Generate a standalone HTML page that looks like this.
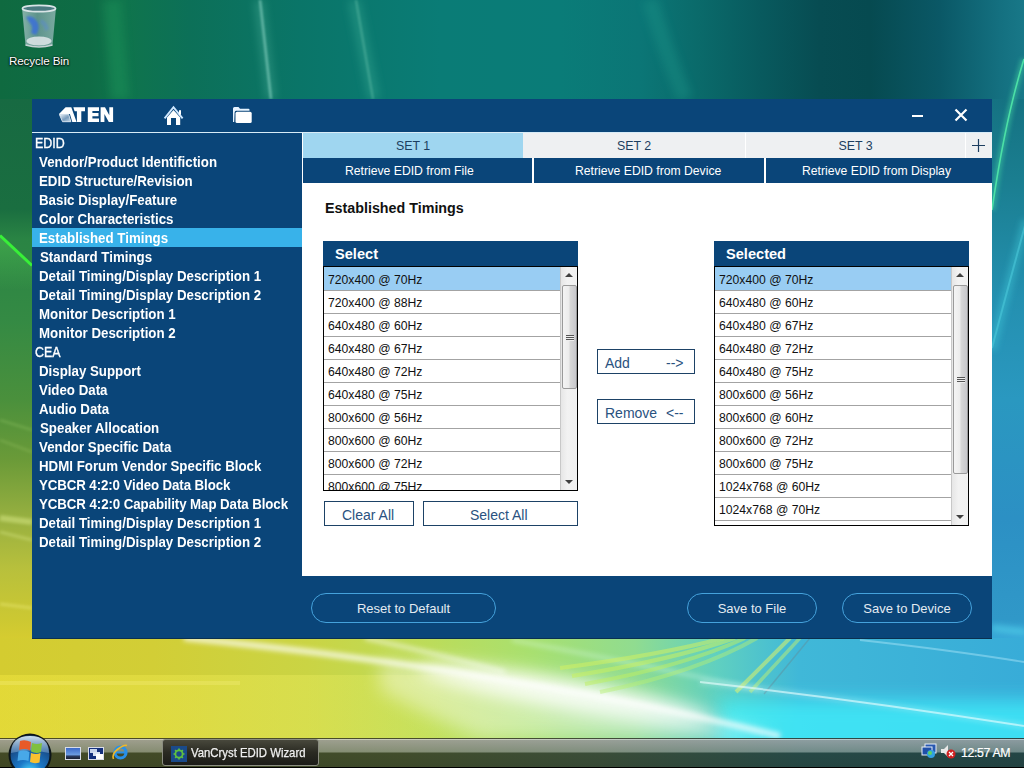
<!DOCTYPE html>
<html><head><meta charset="utf-8">
<style>
*{margin:0;padding:0;box-sizing:border-box}
html,body{width:1024px;height:768px;overflow:hidden}
body{position:relative;font-family:"Liberation Sans",sans-serif;background:#0d6a50}
.abs{position:absolute}
#wall{position:absolute;left:0;top:0;width:1024px;height:738px;overflow:hidden;background:#2a8a50}
#win{position:absolute;left:32px;top:99px;width:960px;height:540px;background:#0a4579;border-bottom:1px solid #0a3050}
.menu{position:absolute;left:0;width:270px;height:19px;color:#fff;font-size:13.3px;font-weight:bold;line-height:19px;white-space:nowrap;transform:scaleY(1.1);transform-origin:0 5px}
.menu.h{font-weight:normal;font-size:13.5px;transform:scale(0.92,1.1);-webkit-text-stroke:0.35px #fff}
.tab{position:absolute;top:34px;height:25px;font-size:12.4px;color:#1c3e60;text-align:center;line-height:27px}
.ret{position:absolute;top:59px;height:25px;background:#0a4579;color:#fff;font-size:12.2px;line-height:26px;white-space:nowrap}
.list{position:absolute;background:#fff}
.lh{position:absolute;left:0;top:0;right:0;height:25px;background:#0a4579;color:#fff;font-weight:bold;font-size:14.6px;line-height:27px;padding-left:12px}
.lb{position:absolute;left:0;top:25px;right:0;bottom:0;border:1px solid #000;overflow:hidden;background:#fff}
.rows{position:absolute;left:0;top:0;right:17px;bottom:0;overflow:hidden}
.row{position:absolute;left:0;right:0;height:23px;border-bottom:1px solid #a3a3a3;font-size:12.2px;color:#111;line-height:24px;padding-left:4px;white-space:nowrap}
.row.sel{background:#99cdf3;line-height:26px}
.sb{position:absolute;right:0;top:0;width:17px;background:linear-gradient(90deg,#e6e6e6,#f2f2f2 40%,#f0f0f0);border-left:1px solid #c8c8c8}
.sbu,.sbd{position:absolute;left:4px;width:0;height:0;border-left:4px solid transparent;border-right:4px solid transparent}
.sbu{top:6px;border-bottom:4px solid #404040}
.sbd{bottom:6px;border-top:4px solid #404040}
.thumb{position:absolute;left:1px;width:15px;border:1px solid #9a9a9a;border-radius:2px;background:linear-gradient(90deg,#f4f4f4 0%,#ececec 45%,#d8d8d8 55%,#c8c8cc 100%)}
.grip{position:absolute;left:3px;width:8px;height:6px;background:repeating-linear-gradient(180deg,#555 0 1px,#eee 1px 2px)}
.btn{position:absolute;border:1px solid #1d4266;color:#2a5280;font-size:14px;background:#fff;white-space:nowrap}
.pill{position:absolute;height:30px;border:1px solid #45a2dc;border-radius:15px;color:#e4ebf2;font-size:13px;text-align:center;line-height:29px;white-space:nowrap}
</style></head><body>
<div id="wall">
  <!-- top band -->
  <div class="abs" style="left:0;top:0;width:1024px;height:99px;background:linear-gradient(90deg,#0f6a40 0px,#0e6c46 90px,#0f744c 125px,#0c7058 190px,#0a7568 300px,#0a7c76 440px,#0a7c78 560px,#0b7676 640px,#0a6a6a 700px,#085a5e 760px,#074c52 820px,#064a50 870px,#0a5866 940px,#147080 1000px,#187888 1024px)"></div>
  <svg class="abs" style="left:0;top:0" width="1024" height="99"><defs><filter id="tb" filterUnits="userSpaceOnUse" x="-50" y="-50" width="1124" height="200"><feGaussianBlur stdDeviation="4"/></filter><filter id="tb1" filterUnits="userSpaceOnUse" x="-50" y="-50" width="1124" height="200"><feGaussianBlur stdDeviation=".8"/></filter></defs>
    <path d="M112,0 L120,99" stroke="#20a060" stroke-width="18" opacity=".35" filter="url(#tb)"/>
    <path d="M259,0 L271,99" stroke="#60c0a8" stroke-width="10" opacity=".3" filter="url(#tb)"/>
    <path d="M260,0 L271,99" stroke="#90d8c8" stroke-width="2.5" opacity=".6" filter="url(#tb1)"/>
    <path d="M354,0 L374,99" stroke="#40b098" stroke-width="12" opacity=".35" filter="url(#tb)"/>
    <path d="M356,0 L373,99" stroke="#70c8b0" stroke-width="2" opacity=".45" filter="url(#tb1)"/>
    <path d="M650,0 Q665,50 685,99" stroke="#20a090" stroke-width="16" opacity=".3" filter="url(#tb)" fill="none"/>
  </svg>
  
  
  <!-- left strip -->
  <div class="abs" style="left:0;top:99px;width:32px;height:540px;background:linear-gradient(180deg,#176a42 0px,#1a6e40 110px,#2a8444 140px,#348a44 220px,#4a903c 300px,#6a9a38 360px,#98b040 420px,#b8c03c 470px,#ccc832 520px,#d6cc30 540px)"></div>
  <svg class="abs" style="left:0;top:200px" width="32" height="90"><defs><filter id="gl"><feGaussianBlur stdDeviation="3"/></filter><linearGradient id="glw" x1="0" y1="0" x2="0" y2="1"><stop offset="0" stop-color="#50c050" stop-opacity=".55"/><stop offset="1" stop-color="#50c050" stop-opacity="0"/></linearGradient></defs>
    <polygon points="0,36 32,66 32,90 0,90" fill="url(#glw)"/>
    <path d="M0,35.5 L32,65.5" stroke="#38f038" stroke-width="3"/>
  </svg>
  <svg class="abs" style="left:0;top:380px" width="32" height="260"><defs><filter id="ls" filterUnits="userSpaceOnUse" x="-50" y="-50" width="150" height="400"><feGaussianBlur stdDeviation="1.5"/></filter></defs>
    <path d="M0,40 L32,50" stroke="#a0d070" stroke-width="2" opacity=".35" filter="url(#ls)"/>
    <path d="M0,60 L32,72" stroke="#a8d070" stroke-width="2" opacity=".3" filter="url(#ls)"/>
    <path d="M0,138 L32,142" stroke="#e0f090" stroke-width="6" opacity=".45" filter="url(#ls)"/>
    <path d="M0,152 L32,160" stroke="#e0f090" stroke-width="3" opacity=".35" filter="url(#ls)"/>
    <path d="M0,224 L32,228" stroke="#f0f080" stroke-width="3" opacity=".4" filter="url(#ls)"/>
  </svg>
  <!-- right strip -->
  <div class="abs" style="left:992px;top:99px;width:32px;height:540px;background:linear-gradient(180deg,#157282 0px,#1a7e90 80px,#2490b0 200px,#2a98c0 300px,#2c90c4 420px,#3098c8 520px,#38a8d8 540px)"></div>
  <svg class="abs" style="left:992px;top:40px" width="32" height="200"><defs><filter id="gr"><feGaussianBlur stdDeviation="2"/></filter></defs>
    <path d="M32,19 Q13,80 0,170" stroke="#40d0a0" stroke-width="6" fill="none" opacity=".5" filter="url(#gr)"/>
    <path d="M32,19 Q13,80 0,170" stroke="#50e8a8" stroke-width="1.6" fill="none" opacity=".9"/>
  </svg>
  <svg class="abs" style="left:992px;top:200px" width="32" height="440"><defs><filter id="rs" filterUnits="userSpaceOnUse" x="-50" y="-50" width="150" height="600"><feGaussianBlur stdDeviation="3"/></filter></defs>
    <path d="M34,20 Q18,80 0,150" stroke="#40c8d8" stroke-width="8" fill="none" opacity=".45" filter="url(#rs)"/>
    <path d="M34,22 Q18,80 0,148" stroke="#50d0e0" stroke-width="2" fill="none" opacity=".5"/>
    <path d="M0,428 Q16,430 34,432" stroke="#60e8f8" stroke-width="5" fill="none" opacity=".6" filter="url(#rs)"/>
  </svg>
  <!-- bottom band -->
  <svg class="abs" style="left:0;top:638px" width="1024" height="100" viewBox="0 638 1024 100">
    <defs>
      <linearGradient id="bb" x1="0" x2="1"><stop offset="0" stop-color="#d4cc30"/><stop offset=".15" stop-color="#d2ce36"/><stop offset=".3" stop-color="#cad444"/><stop offset=".42" stop-color="#bcdc5a"/><stop offset=".52" stop-color="#a8e070"/><stop offset=".62" stop-color="#90dc90"/><stop offset=".7" stop-color="#60d0c0"/><stop offset=".78" stop-color="#40b8d8"/><stop offset="1" stop-color="#38acd8"/></linearGradient>
      <linearGradient id="bb2" x1="0" x2="1"><stop offset="0" stop-color="#f4e840" stop-opacity=".45"/><stop offset=".3" stop-color="#f0f060" stop-opacity=".35"/><stop offset=".55" stop-color="#f0ff80" stop-opacity="0"/></linearGradient>
      <linearGradient id="bb3" x1="0" y1="0" x2="0" y2="1"><stop offset="0" stop-color="#70f0ff" stop-opacity="0"/><stop offset=".5" stop-color="#70f0ff" stop-opacity=".25"/><stop offset="1" stop-color="#80f8ff" stop-opacity=".45"/></linearGradient>
      <filter id="b8" filterUnits="userSpaceOnUse" x="-100" y="500" width="1300" height="400"><feGaussianBlur stdDeviation="9"/></filter>
      <filter id="b3" filterUnits="userSpaceOnUse" x="-100" y="500" width="1300" height="400"><feGaussianBlur stdDeviation="2.5"/></filter>
      <filter id="b1" filterUnits="userSpaceOnUse" x="-100" y="500" width="1300" height="400"><feGaussianBlur stdDeviation=".7"/></filter>
    </defs>
    <rect x="0" y="638" width="1024" height="100" fill="url(#bb)"/>
    <rect x="0" y="675" width="1024" height="63" fill="url(#bb2)"/><rect x="0" y="681" width="240" height="4" fill="#f8f080" opacity=".3" filter="url(#b1)"/>
    <rect x="720" y="700" width="360" height="60" fill="#40f4ff" opacity=".7" filter="url(#b8)"/>
    <!-- big white glow -->
    <path d="M380,660 Q560,680 660,705 Q720,720 780,738 L480,738 Q420,712 380,690 Z" fill="#ffffff" opacity=".4" filter="url(#b8)"/>
    <ellipse cx="565" cy="694" rx="150" ry="15" fill="#ffffff" opacity=".85" filter="url(#b8)" transform="rotate(10 565 694)"/>
    <path d="M184,638 Q360,655 520,683 Q640,702 780,736" stroke="#ffffff" stroke-width="6" fill="none" opacity=".7" filter="url(#b3)"/>
    <path d="M365,638 Q430,652 505,672" stroke="#ffffff" stroke-width="4" fill="none" opacity=".55" filter="url(#b3)"/>
    <path d="M512,640 Q620,660 760,690" stroke="#e0fff0" stroke-width="3" fill="none" opacity=".45" filter="url(#b3)"/>
    <!-- green fan -->
    <g filter="url(#b1)" fill="none">
    <path d="M560,668 Q660,655 724,638" stroke="#d0f060" stroke-width="4" opacity=".55"/>
    <path d="M572,676 Q672,660 735,638" stroke="#c8f060" stroke-width="4" opacity=".55"/>
    <path d="M585,684 Q685,666 745,638" stroke="#c0f060" stroke-width="4" opacity=".5"/>
    <path d="M600,692 Q698,672 757,638" stroke="#b8f070" stroke-width="4" opacity=".45"/>
    <path d="M736,692 L790,638" stroke="#d0f070" stroke-width="4" opacity=".6"/>
    <path d="M750,692 L800,638" stroke="#c0f070" stroke-width="3.5" opacity=".5"/>
    <path d="M764,694 L810,638" stroke="#5898a8" stroke-width="1.5" opacity=".6"/>
    </g>
    <!-- cyan streaks -->
    <path d="M700,682 Q860,700 1024,726" stroke="#e8ffff" stroke-width="2" fill="none" opacity=".6" filter="url(#b1)"/><path d="M700,682 Q860,700 1024,726" stroke="#ffffff" stroke-width="6" fill="none" opacity=".2" filter="url(#b3)"/>
    <path d="M860,640 Q950,650 1024,662" stroke="#c0f0ff" stroke-width="2" fill="none" opacity=".4" filter="url(#b1)"/>
  </svg>
</div>
<!-- desktop icon -->
<svg class="abs" style="left:19px;top:3px" width="40" height="47" viewBox="0 0 40 47">
  <defs><linearGradient id="rb" x1="0" x2="1"><stop offset="0" stop-color="#b8d0d4"/><stop offset=".45" stop-color="#7ea4aa"/><stop offset="1" stop-color="#a8c4c8"/></linearGradient>
  <filter id="rbb"><feGaussianBlur stdDeviation=".9"/></filter></defs>
  <path d="M3,5 L37,5 L33.5,42 Q20,46 6.5,42 Z" fill="url(#rb)" opacity=".7"/>
  <ellipse cx="20" cy="5.5" rx="16.5" ry="3.2" fill="#4a7a80" stroke="#d8e4e6" stroke-width="1.8"/>
  <path d="M7,14 Q14,11 19,20 Q21,26 17,32 L12,30 Q15,24 10,19 Z" fill="#3a70d8" opacity=".85" filter="url(#rbb)"/>
  <path d="M22,16 Q28,18 30,26 L26,28 Q25,22 21,20 Z" fill="#5a8ad0" opacity=".5" filter="url(#rbb)"/>
  <ellipse cx="20" cy="38" rx="12.5" ry="4.5" fill="#e0e8ea" opacity=".85"/>
  <path d="M6.5,42 Q20,46 33.5,42" stroke="#c8d4d6" stroke-width="1.5" fill="none"/>
</svg>
<div class="abs" style="left:9px;top:54px;font-size:11.6px;color:#fff;text-shadow:0 1px 2px #000,0 0 2px #000;white-space:nowrap;letter-spacing:-0.1px">Recycle Bin</div>
<!-- taskbar -->
<div class="abs" style="left:0;top:738px;width:1024px;height:30px;background:linear-gradient(90deg,#d8d040 0px,#cce060 400px,#a8e0a0 600px,#48d0e8 800px,#38b8e0 1024px)"></div>
<div class="abs" style="left:0;top:738px;width:1024px;height:30px;background:linear-gradient(180deg,rgba(40,40,30,.8) 0px,rgba(40,40,30,.8) 1px,rgba(200,200,200,.85) 1px,rgba(200,200,200,.85) 2px,rgba(150,150,150,.88) 2px,rgba(120,128,120,.85) 14px,rgba(30,40,30,.8) 15px,rgba(30,40,30,.82) 29px,#000 29px)"></div>
<!-- start orb -->
<svg class="abs" style="left:8px;top:733px" width="44" height="35" viewBox="0 0 44 35">
  <defs>
    <radialGradient id="orb" cx=".5" cy=".95" r=".7"><stop offset="0" stop-color="#50e0ff"/><stop offset=".45" stop-color="#1a78c8"/><stop offset="1" stop-color="#184c88"/></radialGradient>
    <linearGradient id="orbh" x1="0" y1="0" x2="0" y2="1"><stop offset="0" stop-color="#d8e8f4" stop-opacity=".95"/><stop offset="1" stop-color="#80a8d0" stop-opacity=".5"/></linearGradient>
  </defs>
  <circle cx="22" cy="22" r="21.5" fill="#0c1418"/>
  <circle cx="22" cy="22" r="19.5" fill="url(#orb)"/>
  <path d="M3,20 Q3,3 22,3 Q41,3 41,20 Q22,15 3,20 Z" fill="url(#orbh)"/>
  <path d="M12,8 Q17,6 23,9 L22,17.5 Q17,15 11,17 Z" fill="#e85a28"/>
  <path d="M24,10 Q29,12 34,10 L33,19 Q28,21 23,18.5 Z" fill="#80c040"/>
  <path d="M10.5,18.5 Q16,16.5 21.5,19 L20.5,28 Q15,26 9.5,28 Z" fill="#48a8e8"/>
  <path d="M23,20 Q28,22 32.5,20 L31.5,29.5 Q26,31 22,29 Z" fill="#f8c030"/>
</svg>
<!-- quick launch -->
<div class="abs" style="left:65px;top:747px;width:16px;height:13px;background:linear-gradient(180deg,#3a68c8 0,#6a9ae0 60%,#2a3a60 75%,#1a2030 100%);border:1px solid #d8dce8"></div>
<div class="abs" style="left:88px;top:747px;width:16px;height:13px;background:#14307c;border:1px solid #d8dce8">
  <div class="abs" style="left:1px;top:1px;width:7px;height:4px;background:#c8d4ec"></div>
  <div class="abs" style="left:4px;top:4px;width:7px;height:4px;background:#dde6f4"></div>
  <div class="abs" style="left:7px;top:6px;width:7px;height:5px;background:#fff"></div>
</div>
<svg class="abs" style="left:111px;top:744px" width="17" height="17" viewBox="0 0 17 17">
  <circle cx="9.5" cy="8.5" r="5.5" fill="none" stroke="#2890e8" stroke-width="3.2"/>
  <path d="M5,8.5 L14.5,8.5" stroke="#2890e8" stroke-width="2"/>
  <path d="M2.5,15 Q0.5,10 7,5 Q13,0.5 16,1.5" stroke="#f0b828" stroke-width="1.6" fill="none"/>
</svg>
<!-- taskbar button -->
<div class="abs" style="left:162px;top:739px;width:157px;height:27px;border:1px solid #8a8c80;border-radius:3px;background:linear-gradient(180deg,#48483c 0,#2a2a22 50%,#1c1c18 100%)"></div>
<div class="abs" style="left:171px;top:746px;width:16px;height:16px;background:#1a4a8a"></div>
<svg class="abs" style="left:171px;top:746px" width="16" height="16" viewBox="0 0 16 16"><circle cx="8" cy="8" r="3.6" fill="none" stroke="#60c040" stroke-width="1.8"/><path d="M8,2.5 L8,4.5 M8,11.5 L8,13.5 M2.5,8 L4.5,8 M11.5,8 L13.5,8 M4.1,4.1 L5.5,5.5 M10.5,10.5 L11.9,11.9 M11.9,4.1 L10.5,5.5 M5.5,10.5 L4.1,11.9" stroke="#60c040" stroke-width="1.6"/></svg>
<div class="abs" style="left:191px;top:745px;font-size:13.2px;color:#f0f0f0;white-space:nowrap;transform:scaleX(0.86);transform-origin:0 0;-webkit-text-stroke:0.25px #f0f0f0">VanCryst EDID Wizard</div>
<!-- tray -->
<svg class="abs" style="left:921px;top:743px" width="16" height="16" viewBox="0 0 16 16">
  <rect x="4" y="1" width="11" height="9" fill="#2858b0" stroke="#e8eef8"/>
  <rect x="1" y="4" width="10" height="8" fill="#2050a8" stroke="#e8eef8"/>
  <circle cx="10" cy="11" r="4" fill="#30a0e0"/><circle cx="9" cy="10" r="2" fill="#60d060"/>
</svg>
<svg class="abs" style="left:939px;top:743px" width="17" height="16" viewBox="0 0 17 16">
  <path d="M2,6 L5,6 L9,2 L9,14 L5,10 L2,10 Z" fill="#e8e8e8"/>
  <circle cx="12" cy="11" r="4.5" fill="#d02020"/>
  <path d="M10,9 L14,13 M14,9 L10,13" stroke="#fff" stroke-width="1.3"/>
</svg>
<div class="abs" style="left:961px;top:746px;font-size:12.3px;color:#fff;white-space:nowrap;letter-spacing:-0.35px;-webkit-text-stroke:0.2px #fff">12:57 AM</div>


<!-- window -->
<div id="win">
  <!-- header line -->
  <div class="abs" style="left:0;top:33px;width:960px;height:1px;background:#d8ecf8"></div>
  <!-- menu -->
  <div class="abs" style="left:0;top:129px;width:270px;height:19px;background:#38b2ea"></div>
  <div class="menu h" style="top:34px;left:3px">EDID</div>
  <div class="menu" style="top:53px;left:7px">Vendor/Product Identifiction</div>
  <div class="menu" style="top:72px;left:7px">EDID Structure/Revision</div>
  <div class="menu" style="top:91px;left:7px">Basic Display/Feature</div>
  <div class="menu" style="top:110px;left:7px">Color Characteristics</div>
  <div class="menu" style="top:129px;left:7px">Established Timings</div>
  <div class="menu" style="top:148px;left:8px">Standard Timings</div>
  <div class="menu" style="top:167px;left:7px">Detail Timing/Display Description 1</div>
  <div class="menu" style="top:186px;left:7px">Detail Timing/Display Description 2</div>
  <div class="menu" style="top:205px;left:7px">Monitor Description 1</div>
  <div class="menu" style="top:224px;left:7px">Monitor Description 2</div>
  <div class="menu h" style="top:243px;left:3px">CEA</div>
  <div class="menu" style="top:262px;left:7px">Display Support</div>
  <div class="menu" style="top:281px;left:7px">Video Data</div>
  <div class="menu" style="top:300px;left:7px">Audio Data</div>
  <div class="menu" style="top:319px;left:8px">Speaker Allocation</div>
  <div class="menu" style="top:338px;left:7px">Vendor Specific Data</div>
  <div class="menu" style="top:357px;left:7px">HDMI Forum Vendor Specific Block</div>
  <div class="menu" style="top:376px;left:7px"><span style="letter-spacing:-0.1px">YCBCR 4:2:0 Video Data Block</span></div>
  <div class="menu" style="top:395px;left:7px"><span style="letter-spacing:-0.08px">YCBCR 4:2:0 Capability Map Data Block</span></div>
  <div class="menu" style="top:414px;left:7px">Detail Timing/Display Description 1</div>
  <div class="menu" style="top:433px;left:7px">Detail Timing/Display Description 2</div>

  <!-- right panel -->
  <div class="abs" style="left:270px;top:34px;width:1px;height:443px;background:#fff"></div>
  <div class="abs" style="left:270px;top:34px;width:690px;height:443px;background:#fff"></div>
  <div class="tab" style="left:271px;width:220px;background:#9fd6f0">SET 1</div>
  <div class="tab" style="left:491px;width:222px;background:#eef0f2">SET 2</div>
  <div class="tab" style="left:714px;width:219px;background:#eef0f2">SET 3</div>
  <div class="tab" style="left:934px;width:26px;background:#eef0f2"></div>
  <div class="ret" style="left:271px;width:229px"><span class="abs" style="left:42px;top:0">Retrieve EDID from File</span></div>
  <div class="ret" style="left:502px;width:230px"><span class="abs" style="left:41px;top:0">Retrieve EDID from Device</span></div>
  <div class="ret" style="left:734px;width:226px"><span class="abs" style="left:36px;top:0">Retrieve EDID from Display</span></div>


  <!-- title -->
  <div class="abs" style="left:293px;top:101px;font-size:14.3px;font-weight:bold;color:#111;white-space:nowrap">Established Timings</div>
  <!-- buttons -->
  <div class="btn" style="left:292px;top:402px;width:90px;height:25px"><span class="abs" style="left:17px;top:5px">Clear All</span></div>
  <div class="btn" style="left:391px;top:402px;width:155px;height:25px"><span class="abs" style="left:46px;top:5px">Select All</span></div>
  <div class="btn" style="left:565px;top:250px;width:98px;height:25px"><span class="abs" style="left:7px;top:5px">Add</span><span class="abs" style="left:68px;top:5px">--&gt;</span></div>
  <div class="btn" style="left:565px;top:300px;width:98px;height:25px"><span class="abs" style="left:7px;top:5px">Remove</span><span class="abs" style="left:68px;top:5px">&lt;--</span></div>
  <!-- pills -->
  <div class="pill" style="left:279px;top:494px;width:185px">Reset to Default</div>
  <div class="pill" style="left:655px;top:494px;width:130px">Save to File</div>
  <div class="pill" style="left:810px;top:494px;width:130px">Save to Device</div>
  <!-- header icons -->
  <svg class="abs" style="left:27px;top:8px" width="56" height="16" viewBox="0 0 56 16">
    <defs><linearGradient id="ag" x1="0" y1="0" x2="1" y2="1"><stop offset="0" stop-color="#f0f6fc"/><stop offset="0.55" stop-color="#7a9cbc"/><stop offset="1" stop-color="#c8dcec"/></linearGradient></defs>
    <polygon points="6.6,0.3 12.3,0.3 17.6,15 13.3,15 10.9,7 0,7" fill="#fff"/>
    <polygon points="0.3,7.3 9.6,7.3 11.9,14.7 3.5,14.7" fill="url(#ag)" stroke="#eef4fa" stroke-width=".8"/>
    <polygon points="14.3,0.3 26,0.3 26,4.3 22.3,4.3 22.3,15 17.9,15 17.9,4.3 15.6,4.3" fill="#fff"/>
    <polygon points="28.8,0.3 40,0.3 40,3.9 33.4,3.9 33.4,6 39.5,6 39.5,9.3 33.4,9.3 33.4,11.4 40,11.4 40,15 28.8,15" fill="#fff"/>
    <polygon points="41.6,0.3 46,0.3 50.3,8.2 50.3,0.3 54.1,0.3 54.1,15 49.8,15 45.4,7 45.4,15 41.6,15" fill="#fff"/>
  </svg>
  <svg class="abs" style="left:131px;top:6px" width="22" height="22" viewBox="0 0 22 22">
    <polyline points="1.6,13.4 10.5,2.2 19.6,13.4" fill="none" stroke="#d0e8ff" stroke-width="1.9"/>
    <rect x="16" y="5.2" width="2" height="4.5" fill="#fff"/>
    <polygon points="4,12.4 10.5,5 17.2,12.4 17.2,20 13,20 13,13 8,13 8,20 4,20" fill="#fff"/>
  </svg>
  <svg class="abs" style="left:199px;top:6px" width="22" height="20" viewBox="0 0 22 20">
    <path d="M2,3.6 Q2,2 3.5,2 L7.5,2 L9,3.8 L17.5,3.8 Q18.5,3.8 18.5,4.8 L18.5,5.8 L5,5.8 Q3.8,5.8 3.6,7.5 L3.2,17 L2,17 Z" fill="#e8f4ff"/>
    <rect x="4.5" y="6.8" width="16.2" height="11.2" rx="1.6" fill="#fff"/>
  </svg>
  <div class="abs" style="left:880px;top:16px;width:11px;height:2px;background:#fff"></div>
  <svg class="abs" style="left:922px;top:9px" width="14" height="14" viewBox="0 0 14 14">
    <path d="M1.5,1.5 L12.5,12.5 M12.5,1.5 L1.5,12.5" stroke="#fff" stroke-width="2.2"/>
  </svg>
  <svg class="abs" style="left:939px;top:39px" width="15" height="15" viewBox="0 0 15 15">
    <path d="M7.5,1 L7.5,14 M1,7.5 L14,7.5" stroke="#1c3e60" stroke-width="1.2"/>
  </svg>
  <!-- Select list -->
  <div class="list" style="left:291px;top:142px;width:255px;height:250px">
    <div class="lh">Select</div>
    <div class="lb"><div class="rows"><div class="row sel" style="top:0;height:24px">720x400 @ 70Hz</div>
<div class="row" style="top:24px">720x400 @ 88Hz</div>
<div class="row" style="top:47px">640x480 @ 60Hz</div>
<div class="row" style="top:70px">640x480 @ 67Hz</div>
<div class="row" style="top:93px">640x480 @ 72Hz</div>
<div class="row" style="top:116px">640x480 @ 75Hz</div>
<div class="row" style="top:139px">800x600 @ 56Hz</div>
<div class="row" style="top:162px">800x600 @ 60Hz</div>
<div class="row" style="top:185px">800x600 @ 72Hz</div>
<div class="row" style="top:208px">800x600 @ 75Hz</div>
</div><div class="sb" style="height:223px">
<div class="sbu"></div><div class="sbd"></div>
<div class="thumb" style="top:18px;height:104px"><div class="grip" style="top:49px"></div></div>
</div></div>
  </div>
  <!-- Selected list -->
  <div class="list" style="left:682px;top:142px;width:255px;height:285px">
    <div class="lh">Selected</div>
    <div class="lb"><div class="rows"><div class="row sel" style="top:0;height:24px">720x400 @ 70Hz</div>
<div class="row" style="top:24px">640x480 @ 60Hz</div>
<div class="row" style="top:47px">640x480 @ 67Hz</div>
<div class="row" style="top:70px">640x480 @ 72Hz</div>
<div class="row" style="top:93px">640x480 @ 75Hz</div>
<div class="row" style="top:116px">800x600 @ 56Hz</div>
<div class="row" style="top:139px">800x600 @ 60Hz</div>
<div class="row" style="top:162px">800x600 @ 72Hz</div>
<div class="row" style="top:185px">800x600 @ 75Hz</div>
<div class="row" style="top:208px">1024x768 @ 60Hz</div>
<div class="row" style="top:231px">1024x768 @ 70Hz</div>
<div class="row" style="top:254px">1024x768 @ 75Hz</div>
</div><div class="sb" style="height:258px">
<div class="sbu"></div><div class="sbd"></div>
<div class="thumb" style="top:18px;height:189px"><div class="grip" style="top:91px"></div></div>
</div></div>
  </div>
</div>
</body></html>
